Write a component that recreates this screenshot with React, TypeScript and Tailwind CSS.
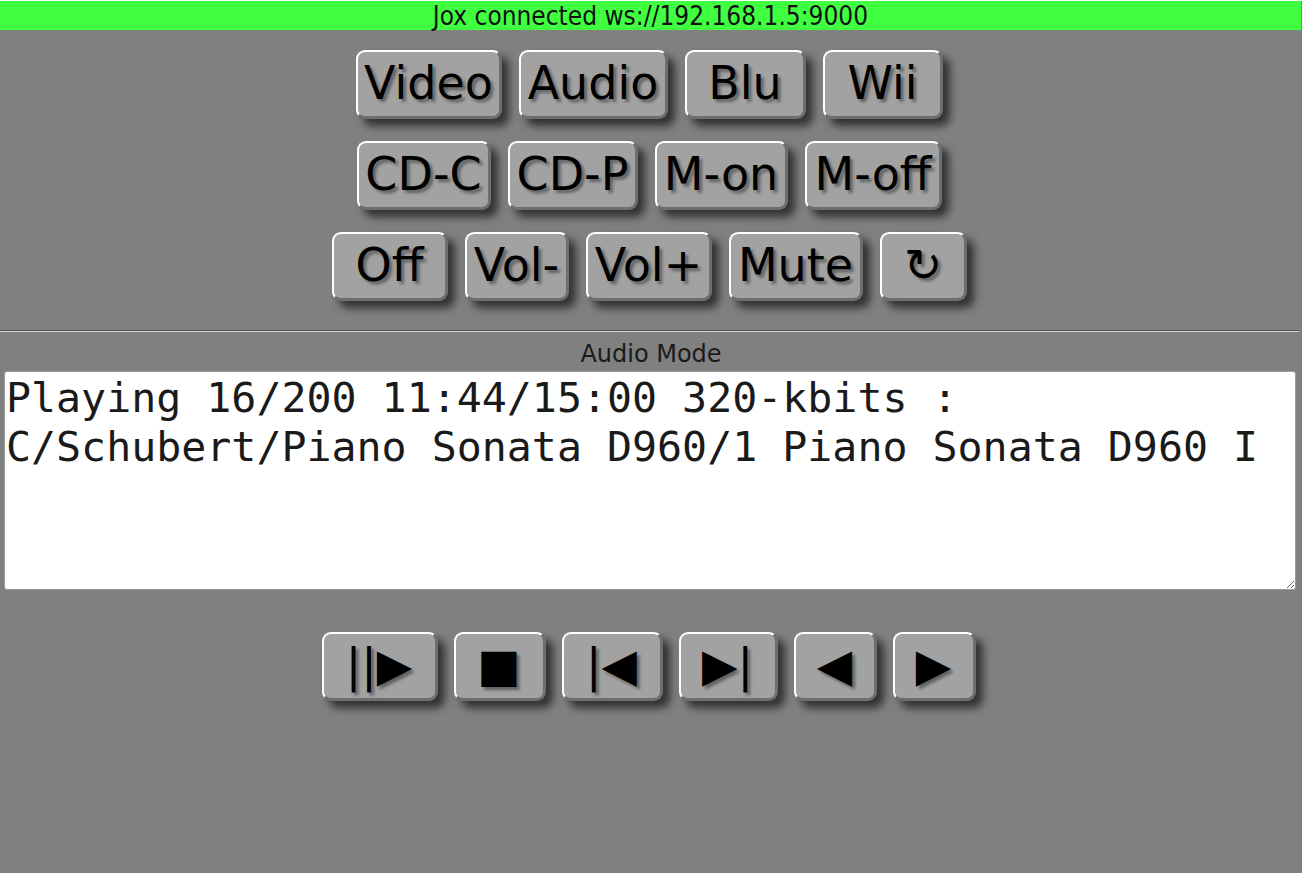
import React from 'react';

const rows = [
  [
    { label: 'Video', w: 'w-[146px]' },
    { label: 'Audio', w: 'w-[149px]' },
    { label: 'Blu', w: 'w-[121px]' },
    { label: 'Wii', w: 'w-[120px]' },
  ],
  [
    { label: 'CD-C', w: 'w-[134px]' },
    { label: 'CD-P', w: 'w-[130px]' },
    { label: 'M-on', w: 'w-[133px]' },
    { label: 'M-off', w: 'w-[137px]' },
  ],
  [
    { label: 'Off', w: 'w-[116px]' },
    { label: 'Vol-', w: 'w-[104px]' },
    { label: 'Vol+', w: 'w-[126px]' },
    { label: 'Mute', w: 'w-[134px]' },
    { label: '↻', w: 'w-[87px]' },
  ],
];

const transport = [
  { label: '||▶', w: 'w-[116px]' },
  { label: '■', w: 'w-[92px]' },
  { label: '|◀', w: 'w-[101px]' },
  { label: '▶|', w: 'w-[99px]' },
  { label: '◀', w: 'w-[83px]' },
  { label: '▶', w: 'w-[83px]' },
];

const PadButton = ({ label, w }: { label: string; w: string }) => (
  <button
    className={`${w} h-[69px] flex items-center justify-center pb-[3px] rounded-[9px] bg-[#a2a2a2] border-t-2 border-l-2 border-r-[3px] border-b-[3px] border-t-white border-l-white border-r-[#6e6e6e] border-b-[#6e6e6e] shadow-[7px_7px_9px_rgba(0,0,0,0.62)] text-[46px] leading-none text-black [text-shadow:3px_3px_3px_rgba(0,0,0,0.4)] whitespace-nowrap`}
  >
    {label}
  </button>
);

export default function App() {
  return (
    <div className="min-h-screen bg-[#808080] font-['DejaVu_Sans',sans-serif]">
      {/* status bar */}
      <div className="mt-[1px] mr-[1px] h-[29px] bg-[#40ff40] flex items-center justify-center text-[#111] text-[26px] leading-none font-['DejaVu_Sans_Condensed','DejaVu_Sans',sans-serif]">
        Jox connected ws://192.168.1.5:9000
      </div>

      {/* mode buttons */}
      <div className="flex flex-col items-center pt-[20px] gap-[22px] pr-[3px]">
        {rows.map((row, i) => (
          <div key={i} className="flex gap-[17px]">
            {row.map((b) => (
              <PadButton key={b.label} label={b.label} w={b.w} />
            ))}
          </div>
        ))}
      </div>

      <div className="mt-[29px] mr-[3px] border-t border-t-[#505050] border-b border-b-[#cfcfcf]" />

      <div className="mt-[10px] text-center text-[24px] leading-none text-[#1a1a1a]">Audio Mode</div>

      <div className="pl-[4px] pr-[6px] mt-[5px]">
        <textarea
          readOnly
          value={'Playing 16/200 11:44/15:00 320-kbits :\nC/Schubert/Piano Sonata D960/1 Piano Sonata D960 I'}
          className="block w-full h-[219px] bg-white border border-[#9a9a9a] rounded-[3px] p-[2px] pl-[1px] text-[41.6px] leading-[1.17] text-[#1a1a1a] font-['DejaVu_Sans_Mono',monospace] outline-none"
        />
      </div>

      {/* transport */}
      <div className="flex justify-center gap-[16px] mt-[42px] pr-[5px]">
        {transport.map((b) => (
          <PadButton key={b.label} label={b.label} w={b.w} />
        ))}
      </div>
    </div>
  );
}
